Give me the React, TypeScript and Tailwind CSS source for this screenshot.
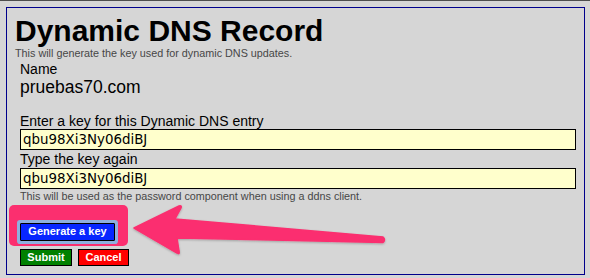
import React from 'react';

const sans = { fontFamily: '"Liberation Sans", Arial, sans-serif' };
const field = { fontFamily: '"DejaVu Sans", "Lucida Grande", sans-serif' };

const KeyInput: React.FC<{ value: string; className?: string }> = ({ value, className = '' }) => (
  <input
    readOnly
    value={value}
    style={field}
    className={`block w-full h-[21px] border border-black bg-[#ffffcc] px-[2px] text-[13.4px] text-black outline-none ${className}`}
  />
);

export default function App() {
  return (
    <div
      style={sans}
      className="relative w-[590px] h-[278px] overflow-hidden bg-[#d6d6d6] border-t border-[#4d4d4d] pt-[6px] pl-[6px]"
    >
      <div className="w-[579px] h-[268px] border border-[#00008b] px-[8px] pt-[8px]">
        <h1 className="text-[30px] leading-[30px] font-bold text-black">Dynamic DNS Record</h1>
        <p className="mt-[1px] text-[10.8px] leading-[13px] text-[#474747]">
          This will generate the key used for dynamic DNS updates.
        </p>

        <div className="pl-[5px]">
          <div className="mt-[1px] text-[14px] leading-[16px] text-black">Name</div>
          <div className="text-[17.5px] leading-[20px] text-black">pruebas70.com</div>

          <label className="block mt-[16px] text-[14px] leading-[16px] text-black">
            Enter a key for this Dynamic DNS entry
          </label>
          <KeyInput value="qbu98Xi3Ny06diBJ" />

          <label className="block mt-[1px] text-[14px] leading-[16px] text-black">Type the key again</label>
          <KeyInput value="qbu98Xi3Ny06diBJ" className="mt-[1px]" />

          <p className="mt-[1px] text-[10.8px] leading-[13px] text-[#474747]">
            This will be used as the password component when using a ddns client.
          </p>

          <div className="relative mt-[15px] h-[18px]">
            {/* annotation highlight */}
            <div className="absolute left-[-11px] top-[-13px] w-[119px] h-[41px] rounded-[5px] bg-[#fb2f6f]" />
            <button className="relative w-[95px] h-[18px] border border-black bg-[#0726ff] text-[11px] font-bold leading-none text-white rounded-[1px] shadow-[0_0_0_3px_#8fb0dd]">
              Generate a key
            </button>
          </div>

          <div className="mt-[13px] flex gap-[6px]">
            <button className="w-[52px] h-[17px] border border-black bg-[#008000] text-[11px] font-bold leading-none text-white">
              Submit
            </button>
            <button className="w-[51px] h-[17px] border border-black bg-[#ff0000] text-[11px] font-bold leading-none text-white">
              Cancel
            </button>
          </div>
        </div>
      </div>

      {/* annotation arrow */}
      <svg
        className="absolute left-0 top-0 pointer-events-none"
        width="590"
        height="278"
        viewBox="0 0 590 278"
      >
        <defs>
          <filter id="sh" x="-10%" y="-50%" width="120%" height="200%">
            <feDropShadow dx="0" dy="1" stdDeviation="1" floodColor="#000" floodOpacity="0.25" />
          </filter>
        </defs>
        <path
          d="M134 227 L179 205 Q182 204 181 207 L175 218 L383 236 Q386 238.5 383 241.5 L177 237 L179 250 Q180 254 177 252 Z"
          fill="#fb2f6f"
          stroke="#fb2f6f"
          strokeWidth="1.5"
          strokeLinejoin="round"
          filter="url(#sh)"
        />
      </svg>
    </div>
  );
}
